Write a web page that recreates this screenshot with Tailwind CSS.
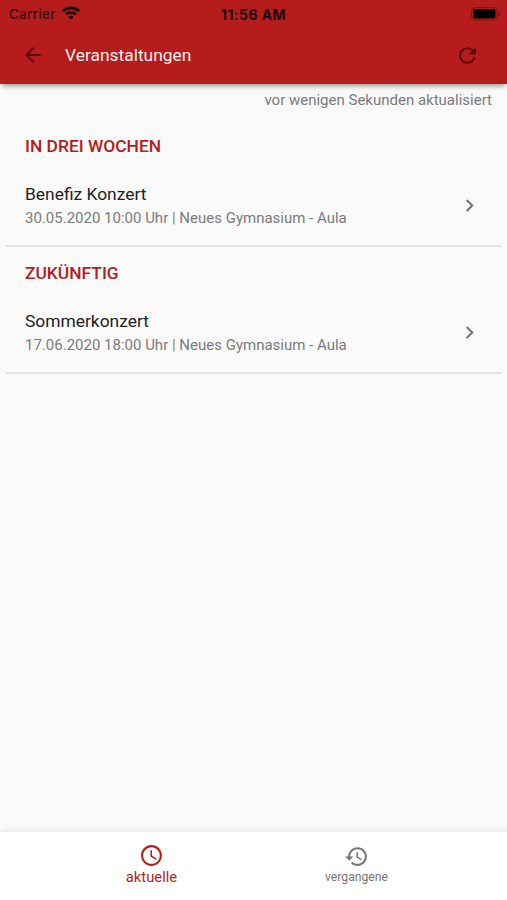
<!DOCTYPE html>
<html lang="de">
  <head>
    <meta charset="UTF-8" />
    <meta name="viewport" content="width=device-width, initial-scale=1.0" />
    <title>Veranstaltungen</title>
    <script src="https://cdn.jsdelivr.net/npm/@tailwindcss/browser@4"></script>
  </head>
  <body class="flex h-[900px] w-[507px] flex-col overflow-hidden bg-[#fafafa] font-['Roboto',sans-serif]">
    <header class="h-[84px] shrink-0 bg-[#b71c1c] shadow-[0_4px_5px_-2px_rgba(0,0,0,0.4)]">
      <div class="grid h-[27px] grid-cols-3 items-center pr-[6px] pl-[9px] font-['Inter',sans-serif] text-[#1c0404]">
        <div class="flex items-center gap-[6px]">
          <span class="pt-px text-[13.5px] leading-[27px] tracking-[0.35px]">Carrier</span>
          <svg class="mb-[2px] h-[14px] w-[18px]" viewBox="0 0 18 14" fill="none" stroke="currentColor" stroke-width="2.6">
            <path d="M1 5.2a11.4 11.4 0 0 1 16 0" />
            <path d="M4 8.4a7.1 7.1 0 0 1 10 0" />
            <path d="M9 13.6 6.3 10.9a3.8 3.8 0 0 1 5.4 0z" fill="currentColor" stroke="none" />
          </svg>
        </div>
        <span class="pr-[3px] text-center text-[14px] leading-[27px] font-bold tracking-[0.45px] whitespace-nowrap">11:56 AM</span>
        <svg class="h-[14px] w-[30px] justify-self-end" viewBox="0 0 30 14">
          <rect x="0.5" y="0.5" width="25.5" height="12.5" rx="3.5" fill="none" stroke="#000" stroke-opacity="0.3" />
          <rect x="2" y="2" width="22.5" height="9.5" rx="2" fill="#000" />
          <path d="M27.5 4.5c2 .6 2 3.9 0 4.5z" fill="#000" fill-opacity="0.4" />
        </svg>
      </div>
      <div class="flex h-[56px] items-center pr-[27px] pl-[21px]">
        <svg class="mr-[19px] size-[24px] fill-[#5c0e0e]" viewBox="0 0 24 24"><path d="M20 11H7.83l5.59-5.59L12 4l-8 8 8 8 1.41-1.41L7.83 13H20v-2z" /></svg>
        <h1 class="ml-px text-[17.4px] leading-6 text-white/95">Veranstaltungen</h1>
        <svg class="ml-auto size-[25px] fill-[#5c0e0e]" viewBox="0 0 24 24"><path d="M17.65 6.35C16.2 4.9 14.21 4 12 4c-4.42 0-7.99 3.58-7.99 8s3.57 8 7.99 8c3.73 0 6.84-2.55 7.73-6h-2.08c-.82 2.33-3.04 4-5.65 4-3.31 0-6-2.69-6-6s2.69-6 6-6c1.66 0 3.14.69 4.22 1.78L13 11h7V4l-2.35 2.35z" /></svg>
      </div>
    </header>

    <main class="flex-1">
      <p class="mt-[6px] pr-[15px] text-right text-[15px] leading-5 text-[#7b7b7b]">vor wenigen Sekunden aktualisiert</p>

      <section class="mt-[14px] mr-[5px] ml-[6px] h-[123px] border-b-2 border-[#e4e4e4] pr-[20px] pl-[19px]">
        <h2 class="pt-[12px] text-[17.4px] leading-5 font-medium text-[#b71c1c]">IN DREI WOCHEN</h2>
        <div class="mt-[25px] flex items-center justify-between">
          <div>
            <h3 class="pt-px text-[17.4px] leading-6 text-[#222]">Benefiz Konzert</h3>
            <p class="text-[15px] leading-6 text-[#7b7b7b]">30.05.2020 10:00 Uhr | Neues Gymnasium - Aula</p>
          </div>
          <svg class="size-[25px] fill-[#757575]" viewBox="0 0 24 24"><path d="M10 6 8.59 7.41 13.17 12l-4.58 4.59L10 18l6-6z" /></svg>
        </div>
      </section>

      <section class="mr-[5px] ml-[6px] h-[127px] border-b-2 border-[#e4e4e4] pr-[20px] pl-[19px]">
        <h2 class="pt-[16px] text-[17.4px] leading-5 font-medium text-[#b71c1c]">ZUKÜNFTIG</h2>
        <div class="mt-[25px] flex items-center justify-between">
          <div>
            <h3 class="pt-px text-[17.4px] leading-6 text-[#222]">Sommerkonzert</h3>
            <p class="text-[15px] leading-6 text-[#7b7b7b]">17.06.2020 18:00 Uhr | Neues Gymnasium - Aula</p>
          </div>
          <svg class="size-[25px] fill-[#757575]" viewBox="0 0 24 24"><path d="M10 6 8.59 7.41 13.17 12l-4.58 4.59L10 18l6-6z" /></svg>
        </div>
      </section>
    </main>

    <nav class="flex h-[68px] shrink-0 justify-center bg-white pl-px shadow-[0_-1px_6px_rgba(0,0,0,0.1)]">
      <a href="#" class="flex w-[205px] flex-col items-center pt-[11px] text-[#b71c1c]">
        <svg class="size-[25px] fill-current" viewBox="0 0 24 24"><path d="M11.99 2C6.47 2 2 6.48 2 12s4.47 10 9.99 10C17.52 22 22 17.52 22 12S17.52 2 11.99 2zM12 20c-4.42 0-8-3.58-8-8s3.58-8 8-8 8 3.58 8 8-3.58 8-8 8zm.5-13H11v6l5.25 3.15.75-1.23-4.5-2.67z" /></svg>
        <span class="text-[14.8px] leading-[19px]">aktuelle</span>
      </a>
      <a href="#" class="flex w-[205px] flex-col items-center pt-[12px] text-[#757575]">
        <svg class="size-[25px] fill-current" viewBox="0 0 24 24"><path d="M13 3c-4.97 0-9 4.03-9 9H1l3.89 3.89.07.14L9 12H6c0-3.87 3.13-7 7-7s7 3.13 7 7-3.13 7-7 7c-1.93 0-3.68-.79-4.94-2.06l-1.42 1.42C8.27 19.99 10.51 21 13 21c4.97 0 9-4.03 9-9s-4.03-9-9-9zm-1 5v5l4.28 2.54.72-1.21-3.5-2.08V8H12z" /></svg>
        <span class="text-[12.2px] leading-[17px]">vergangene</span>
      </a>
    </nav>
  </body>
</html>
